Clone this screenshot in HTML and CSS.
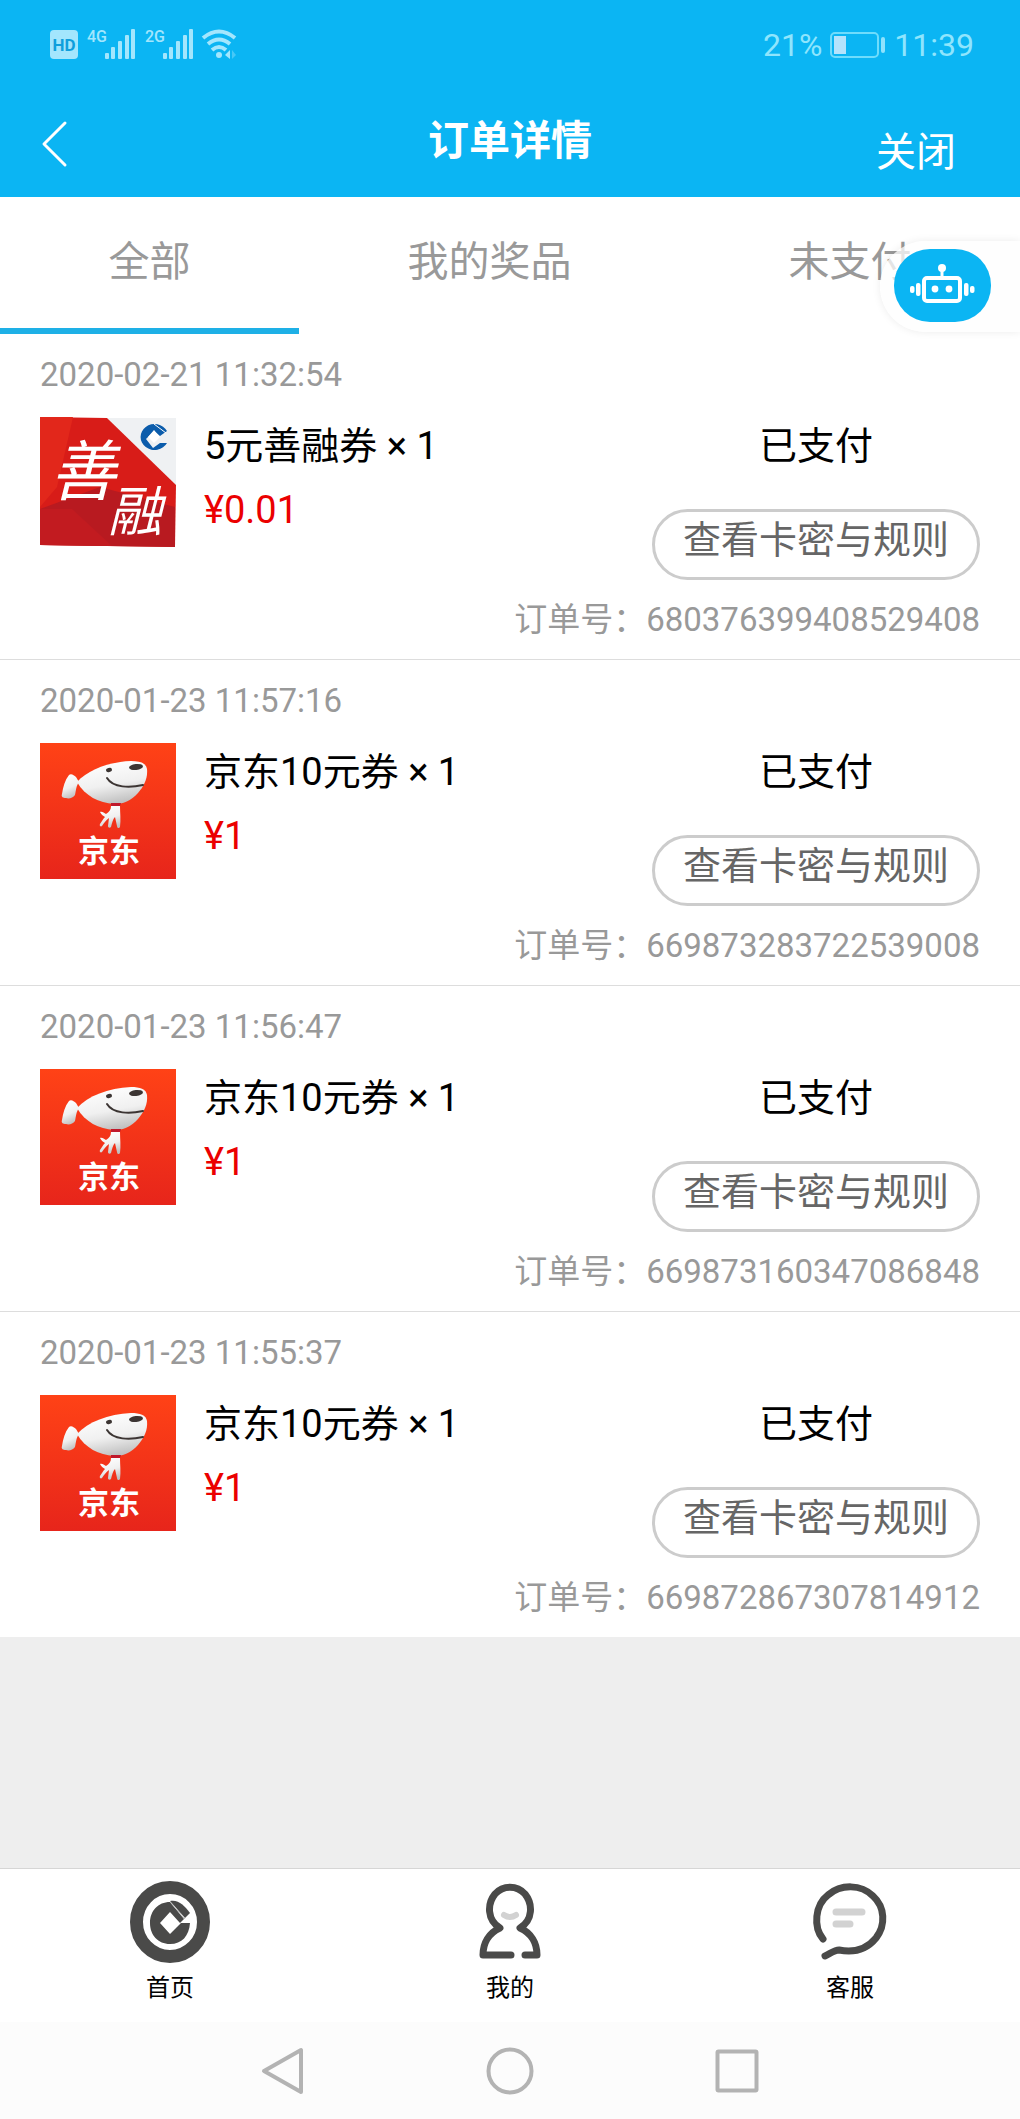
FILE: index.html
```html
<!DOCTYPE html>
<html lang="zh-CN">
<head>
    <meta charset="UTF-8">
    <meta name="viewport" content="width=device-width, initial-scale=1.0">
    <title>订单详情</title>
    <link rel="stylesheet" href="styles.css">
</head>
<body>

<!-- shared drawings -->
<svg class="defs" width="0" height="0" aria-hidden="true">
    <defs>
        <linearGradient id="jdRed" x1="0" y1="0" x2="0" y2="1">
            <stop offset="0" stop-color="#ff4216"/>
            <stop offset="1" stop-color="#e7251b"/>
        </linearGradient>
        <linearGradient id="jdWhite" x1="0.3" y1="0" x2="0.6" y2="1">
            <stop offset="0" stop-color="#ffffff"/>
            <stop offset="0.55" stop-color="#f0f0f0"/>
            <stop offset="1" stop-color="#bdbdbd"/>
        </linearGradient>
    </defs>
    <symbol id="jd" viewBox="0 0 136 136">
        <rect width="136" height="136" fill="url(#jdRed)"/>
        <path d="M29 32c2-2 5 0 7 2l3 5c-3 4-3 9-4 13-2 3-6 4-9 3-3 0-5-1-4-4 1-7 3-14 7-19z" fill="url(#jdWhite)"/>
        <path d="M37 39c11-12 31-20 54-21 9 0 15 2 16 8 1 9-3 17-9 24-7 8-15 11-24 11-15-1-29-8-37-22z" fill="url(#jdWhite)"/>
        <ellipse cx="96" cy="24" rx="7" ry="3" fill="#3c3533" transform="rotate(-6 96 24)"/>
        <ellipse cx="69" cy="27" rx="3" ry="2" fill="#3c3533" transform="rotate(-15 69 27)"/>
        <path d="M67 35c6 10 23 10 36 7" fill="none" stroke="#3c3533" stroke-width="2" stroke-linecap="round"/>
        <path d="M71 60h10l-1 3h-9z" fill="#c0182b"/>
        <path d="M71 63h9c0 7 1 14 0 21-1 2-3 1-3-1l-2-9c-2 2-3 6-4 10-1 1-3 1-3-1l1-8c-3 2-5 5-7 8-1 1-3 0-2-2 2-3 3-5 5-7-2-1-4-3-5-5 2-1 4 1 6 2 3-2 5-4 5-8z" fill="url(#jdWhite)"/>
    </symbol>
</svg>

<div class="page">
    <header class="header">
        <div class="status">
            <div class="status-left">
                <svg width="190" height="44" viewBox="0 -6 190 44" fill="#a3e6fd" aria-hidden="true">
                    <rect x="0" y="1" width="28" height="29" rx="4"/>
                    <text x="14" y="22" class="hd">HD</text>
                    <text x="37" y="13" class="net">4G</text>
                    <g id="bars">
                        <rect x="55" y="24" width="4" height="6" rx="1"/>
                        <rect x="61" y="18" width="4" height="12" rx="1"/>
                        <rect x="68" y="12" width="4" height="18" rx="1"/>
                        <rect x="75" y="6" width="4" height="24" rx="1"/>
                        <rect x="81" y="0" width="4" height="30" rx="1"/>
                    </g>
                    <text x="95" y="13" class="net">2G</text>
                    <use href="#bars" x="58"/>
                    <g fill="none" stroke="#a3e6fd" stroke-width="4">
                        <path d="M153 9q16-13 32 0"/>
                        <path d="M158 15q11-9 22 0"/>
                        <path d="M162 21q7-6 14 0"/>
                    </g>
                    <circle cx="169" cy="26" r="3"/>
                    <path d="M180 21v9l-5-4z"/>
                    <path d="M182 21v9l4-4z" opacity=".4"/>
                </svg>
            </div>
            <div class="status-right">
                <span>21%</span>
                <svg width="56" height="26" viewBox="0 0 56 26" aria-hidden="true">
                    <rect x="1" y="1" width="47" height="24" rx="4" fill="none" stroke="#6fdcfc" stroke-width="2"/>
                    <rect x="4" y="4" width="12" height="18" fill="#b5e3fc"/>
                    <rect x="51" y="5" width="4" height="16" rx="2" fill="#8fe2fd"/>
                </svg>
                <span>11:39</span>
            </div>
        </div>
        <div class="nav">
            <button class="back" aria-label="返回">
                <svg width="28" height="48" viewBox="0 0 28 48" aria-hidden="true">
                    <path d="M25 3L4 24l21 21" fill="none" stroke="#fff" stroke-width="3" stroke-linecap="round" stroke-linejoin="round"/>
                </svg>
            </button>
            <h1>订单详情</h1>
            <button class="close">关闭</button>
        </div>
    </header>

    <nav class="tabs">
        <a href="#" class="tab active">全部</a>
        <a href="#" class="tab">我的奖品</a>
        <a href="#" class="tab">未支付</a>
        <button class="robot" aria-label="智能客服">
            <svg width="97" height="73" viewBox="0 0 97 73" aria-hidden="true">
                <rect width="97" height="73" rx="36" fill="#0bb5f3"/>
                <rect x="30" y="29" width="36" height="23" rx="3" fill="none" stroke="#fff" stroke-width="4"/>
                <path d="M48 18v10" stroke="#fff" stroke-width="3"/>
                <g fill="#fff">
                    <circle cx="48" cy="19" r="4"/>
                    <circle cx="41" cy="40" r="3.4"/>
                    <circle cx="55" cy="40" r="3.4"/>
                    <rect x="22" y="34" width="4.5" height="13" rx="2"/>
                    <rect x="16" y="37" width="4.5" height="7" rx="2"/>
                    <rect x="70" y="34" width="4.5" height="13" rx="2"/>
                    <rect x="76" y="37" width="4.5" height="7" rx="2"/>
                </g>
            </svg>
        </button>
    </nav>

    <main class="orders">
        <article class="order">
            <time class="date">2020-02-21 11:32:54</time>
            <div class="order-body">
                <svg class="thumb" viewBox="0 0 136 136" role="img" aria-label="善融">
                    <path d="M67 1h69v67z" fill="#eff1f3"/>
                    <path d="M0 0l67 1 69 67-1 62-135-2z" fill="#d81c18"/>
                    <path d="M0 0h33L17 70 0 90z" fill="#e2271b"/>
                    <path d="M0 92l60-22 75 20v40l-135-2z" fill="#b81a20"/>
                    <path d="M32 92l40 37-72-1V92z" fill="#c21b20"/>
                    <path d="M127 14a14 13 0 1 0 0 12h-7l-7 5-7-9 8-8 6 5z" fill="#0b5cab"/>
                    <path d="M114 13l6 7-6 6-6-6z" fill="#fff"/>
                    <path d="M114 7l12 9" stroke="#fff" stroke-width="1"/>
                    <text x="10" y="78" class="shan">善</text>
                    <text x="68" y="114" class="rong">融</text>
                </svg>
                <div class="info">
                    <h2>5元善融券 × 1</h2>
                    <p class="price">¥0.01</p>
                </div>
                <div class="side">
                    <p class="state">已支付</p>
                    <button class="view">查看卡密与规则</button>
                </div>
            </div>
            <p class="number">订单号：680376399408529408</p>
        </article>

        <article class="order">
            <time class="date">2020-01-23 11:57:16</time>
            <div class="order-body">
                <svg class="thumb" viewBox="0 0 136 136" role="img" aria-label="京东">
                    <use href="#jd"/>
                    <text x="69" y="119" class="jd-name">京东</text>
                </svg>
                <div class="info">
                    <h2>京东10元券 × 1</h2>
                    <p class="price">¥1</p>
                </div>
                <div class="side">
                    <p class="state">已支付</p>
                    <button class="view">查看卡密与规则</button>
                </div>
            </div>
            <p class="number">订单号：669873283722539008</p>
        </article>

        <article class="order">
            <time class="date">2020-01-23 11:56:47</time>
            <div class="order-body">
                <svg class="thumb" viewBox="0 0 136 136" role="img" aria-label="京东">
                    <use href="#jd"/>
                    <text x="69" y="119" class="jd-name">京东</text>
                </svg>
                <div class="info">
                    <h2>京东10元券 × 1</h2>
                    <p class="price">¥1</p>
                </div>
                <div class="side">
                    <p class="state">已支付</p>
                    <button class="view">查看卡密与规则</button>
                </div>
            </div>
            <p class="number">订单号：669873160347086848</p>
        </article>

        <article class="order">
            <time class="date">2020-01-23 11:55:37</time>
            <div class="order-body">
                <svg class="thumb" viewBox="0 0 136 136" role="img" aria-label="京东">
                    <use href="#jd"/>
                    <text x="69" y="119" class="jd-name">京东</text>
                </svg>
                <div class="info">
                    <h2>京东10元券 × 1</h2>
                    <p class="price">¥1</p>
                </div>
                <div class="side">
                    <p class="state">已支付</p>
                    <button class="view">查看卡密与规则</button>
                </div>
            </div>
            <p class="number">订单号：669872867307814912</p>
        </article>
    </main>

    <nav class="tabbar">
        <a href="#">
            <svg width="80" height="82" viewBox="0 0 80 82" aria-hidden="true">
                <ellipse cx="40" cy="41" rx="33.500" ry="34.500" fill="none" stroke="#4a4a49" stroke-width="13"/>
                <path d="M40 21C28 21 20 30 20 42s8 21 20 21c12 0 19-8 20-21h-9l-11 11-10-11 10-11 10 11 4-4z" fill="#4a4a49"/>
                <path d="M40 20c8-2 15 5 20 12l-5 5z" fill="#4a4a49"/>
                <path d="M41 22l14 16" stroke="#bbb" stroke-width="1"/>
                <path d="M40 33l9 9-9 10-9-10z" fill="#fff"/>
            </svg>
            <span>首页</span>
        </a>
        <a href="#">
            <svg width="80" height="82" viewBox="0 0 80 82" fill="none" stroke-width="7" stroke-linecap="round" stroke-linejoin="round" aria-hidden="true">
                <path d="M41 74H13c0-12 6-22 17-27C17 39 17 23 25 13c8-9 22-9 30 0 8 10 8 26-5 34 11 5 17 15 17 27H55" stroke="#4a4a49"/>
                <path d="M34 34q6 4 12 0" stroke="#d2d2d2" stroke-width="6"/>
            </svg>
            <span>我的</span>
        </a>
        <a href="#">
            <svg width="80" height="82" viewBox="0 0 80 82" fill="none" stroke-width="7" stroke-linecap="round" stroke-linejoin="round" aria-hidden="true">
                <path d="M13 58C3 46 5 24 18 14c13-11 33-11 45 1 12 11 13 29 3 42-9 11-22 15-37 12-5 0-9 4-14 6" stroke="#4a4a49"/>
                <path d="M26 31h26M26 43h14" stroke="#d2d2d2"/>
            </svg>
            <span>客服</span>
        </a>
    </nav>

    <div class="system-nav">
        <button aria-label="返回">
            <svg width="48" height="48" viewBox="0 0 48 48"><path d="M42 3v42L5 24z"/></svg>
        </button>
        <button aria-label="主屏幕">
            <svg width="48" height="48" viewBox="0 0 48 48"><circle cx="24" cy="24" r="21.500"/></svg>
        </button>
        <button aria-label="最近任务">
            <svg width="48" height="48" viewBox="0 0 48 48"><rect x="4.500" y="4.500" width="39" height="39" rx="1"/></svg>
        </button>
    </div>
</div>

</body>
</html>
```
FILE: styles.css
```css
* {
    box-sizing: border-box;
}
body {
    margin: 0;
    background: #eee;
    color: #000;
    font-family: Roboto, "Noto Sans CJK SC", sans-serif;
}
h1, h2, p {
    margin: 0;
    font-weight: 400;
}
a {
    color: inherit;
    text-decoration: none;
}
button {
    padding: 0;
    border: none;
    background: none;
    color: inherit;
    font-family: inherit;
    cursor: pointer;
}
svg {
    display: block;
}
.defs {
    position: absolute;
}
.page {
    display: flex;
    flex-direction: column;
    min-height: 100vh;
}

/* header */
.header {
    background: #0bb5f3;
    color: #fff;
}
.status {
    display: flex;
    justify-content: space-between;
    align-items: center;
    height: 90px;
    padding: 0 46px 0 50px;
}
.status-right {
    display: flex;
    align-items: center;
    gap: 8px;
    color: #8fe5fd;
    font-size: 32px;
}
.hd {
    fill: #0f9fdc;
    font-size: 17px;
    font-weight: 700;
    text-anchor: middle;
}
.net {
    font-size: 16px;
    font-weight: 500;
}
.nav {
    display: grid;
    grid-template-columns: 1fr auto 1fr;
    align-items: center;
    height: 107px;
    padding: 0 64px 0 40px;
}
.nav h1 {
    padding: 0 0 14px 24px;
    font-size: 41px;
    font-weight: 700;
}
.close {
    justify-self: end;
    padding-top: 10px;
    font-size: 40px;
}

/* tabs */
.tabs {
    position: relative;
    display: flex;
    background: #fff;
}
.tab {
    flex: 1 1 auto;
    border-bottom: 6px solid transparent;
    color: #999;
    font-size: 41px;
    line-height: 131px;
    text-align: center;
}
.tab.active {
    border-color: #1eb0e6;
}
.robot {
    position: absolute;
    top: 44px;
    right: 0;
    padding: 8px 29px 10px 14px;
    border-radius: 46px 0 0 46px;
    background: rgba(253, 253, 253, 0.75);
    box-shadow: 0 0 8px rgba(0, 0, 0, 0.08);
}

/* orders */
.orders {
    flex: 1;
}
.order {
    padding: 2px 40px 9px;
    border-bottom: 1px solid #ddd;
    background: #fff;
}
.order:last-child {
    border-color: #eee;
}
.date {
    display: block;
    color: #999;
    font-size: 33px;
    line-height: 78px;
}
.order-body {
    display: flex;
    gap: 28px;
}
.thumb {
    flex: none;
    width: 136px;
    height: 136px;
    margin-top: 3px;
}
.jd-name {
    fill: #fff;
    font-size: 31px;
    font-weight: 700;
    text-anchor: middle;
}
.shan, .rong {
    fill: #fff;
    font-style: italic;
    font-weight: 400;
}
.shan {
    font-size: 66px;
}
.rong {
    font-size: 54px;
}
.info {
    flex: 1;
}
.info h2, .price, .state {
    font-size: 38px;
    line-height: 64px;
}
.price {
    color: #eb0000;
}
.side {
    width: 328px;
    text-align: center;
}
.view {
    width: 100%;
    margin-top: 31px;
    padding-bottom: 8px;
    border: 3px solid #ccc;
    border-radius: 36px;
    color: #666;
    font-size: 38px;
    line-height: 57px;
}
.number {
    margin-top: 10px;
    color: #999;
    font-size: 33px;
    line-height: 60px;
    text-align: right;
}

/* bottom bar */
.tabbar {
    display: grid;
    grid-template-columns: repeat(3, 1fr);
    padding: 12px 0 9px;
    border-top: 1px solid #d6d6d6;
    background: #fff;
}
.tabbar a {
    display: flex;
    flex-direction: column;
    align-items: center;
    font-size: 24px;
    line-height: 50px;
}
.system-nav {
    display: grid;
    grid-template-columns: repeat(3, 1fr);
    justify-items: center;
    height: 97px;
    padding: 0 170px;
    background: #fcfcfc;
}
.system-nav svg {
    fill: none;
    stroke: #b3b3b3;
    stroke-width: 4px;
    stroke-linejoin: round;
}
```
